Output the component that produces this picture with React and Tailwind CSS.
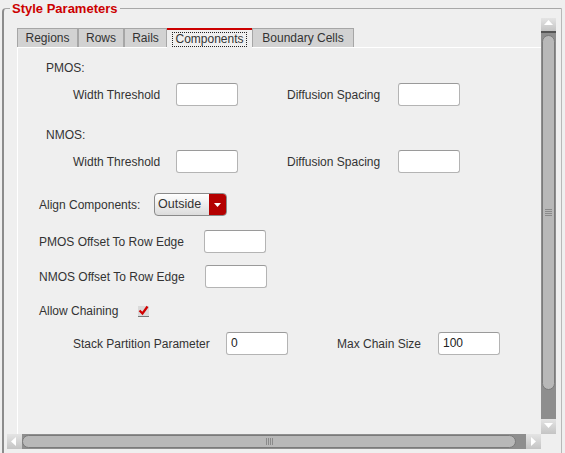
import React from "react";

const font = { fontFamily: '"Liberation Sans", Arial, sans-serif' };

function Field({ value = "", className = "" }) {
  return (
    <div
      className={`h-[23px] w-[62px] rounded-[3px] border border-[#b4b4b4] border-t-[#9a9a9a] bg-white pl-[4px] text-[12px] leading-[21px] text-[#222] ${className}`}
    >
      {value}
    </div>
  );
}

function Tab({ label, w, active }) {
  if (active) {
    return (
      <div
        className={`relative z-10 flex h-[20px] ${w} items-center justify-center border-t-2 border-[#cc0000] bg-[#efefef]`}
      >
        <span className="border border-dotted border-[#222] px-[2px] leading-[13px] text-[#333]">
          {label}
        </span>
      </div>
    );
  }
  return (
    <div
      className={`flex h-[19px] ${w} items-center justify-center border border-b-0 border-[#a6a6a6] bg-[#d2d2d2] text-[#333]`}
    >
      {label}
    </div>
  );
}

function ArrowBtn({ dir, className = "" }) {
  const pts = {
    up: "3,8 7.5,3 12,8",
    down: "3,4 7.5,9 12,4",
    left: "9,3 4,7.5 9,12",
    right: "5,3 10,7.5 5,12",
  }[dir];
  return (
    <div
      className={`flex items-center justify-center bg-gradient-to-b from-[#e4e4e4] to-[#c4c4c4] ${className}`}
    >
      <svg width="15" height="15" viewBox="0 0 15 15">
        <polygon points={pts} fill="#ffffff" />
      </svg>
    </div>
  );
}

export default function App() {
  return (
    <div className="h-[453px] w-[565px] overflow-hidden bg-[#efefef] text-[12px]" style={font}>
      <div className="relative ml-[2px] mt-[8px] h-[460px] w-[560px] border-l-2 border-r border-t border-l-[#8c8c8c] border-r-[#b8b8b8] border-t-[#a8a8a8] rounded-tl-[4px]">
        {/* group title */}
        <div className="absolute left-[6px] top-[-8px] bg-[#efefef] px-[2px] text-[13px] font-bold leading-[16px] text-[#cc0000]">
          Style Parameters
        </div>

        <div className="ml-[3px] mt-[9px] grid grid-cols-[534px_15px] grid-rows-[416px_15px]">
          {/* main content */}
          <div className="overflow-hidden pl-[10px] pt-[10px]">
            <div className="flex">
              <Tab label="Regions" w="w-[61px]" />
              <Tab label="Rows" w="w-[46px]" />
              <Tab label="Rails" w="w-[43px]" />
              <Tab label="Components" w="w-[85px]" active />
              <Tab label="Boundary Cells" w="w-[102px]" />
            </div>
            <div className="-mt-[1px] h-[400px] border-l border-t border-white bg-[#efefef] text-[#333]">
              <div className="ml-[28px] mt-[13px] leading-[14px]">PMOS:</div>
              <div className="mt-[8px] flex items-center pl-[55px]">
                <span className="w-[103px]">Width Threshold</span>
                <Field />
                <span className="ml-[49px] w-[111px]">Diffusion Spacing</span>
                <Field />
              </div>

              <div className="ml-[28px] mt-[22px] leading-[14px]">NMOS:</div>
              <div className="mt-[8px] flex items-center pl-[55px]">
                <span className="w-[103px]">Width Threshold</span>
                <Field />
                <span className="ml-[49px] w-[111px]">Diffusion Spacing</span>
                <Field />
              </div>

              <div className="mt-[20px] flex items-center pl-[21px]">
                <span className="w-[115px]">Align Components:</span>
                <div className="flex h-[23px] w-[73px] overflow-hidden rounded-[4px] border border-[#8a8a8a] bg-gradient-to-b from-white to-[#dcdcdc]">
                  <span className="flex-1 pl-[3px] text-[12.5px] leading-[21px] text-[#333]">Outside</span>
                  <div className="flex w-[17px] items-center justify-center bg-[#b40000]">
                    <svg width="9" height="6" viewBox="0 0 9 6">
                      <polygon points="1,1 8,1 4.5,5" fill="#ffffff" />
                    </svg>
                  </div>
                </div>
              </div>

              <div className="mt-[14px] flex items-center pl-[21px]">
                <span className="w-[165px]">PMOS Offset To Row Edge</span>
                <Field />
              </div>
              <div className="mt-[12px] flex items-center pl-[21px]">
                <span className="w-[166px]">NMOS Offset To Row Edge</span>
                <Field />
              </div>

              <div className="mt-[16px] flex h-[14px] items-center pl-[21px]">
                <span className="w-[99px]">Allow Chaining</span>
                <div className="flex h-[11px] w-[11px] items-center justify-center border-b border-[#777] bg-[#dadada]">
                  <svg width="11" height="11" viewBox="0 0 11 11">
                    <path d="M1.5 5.5 L4.5 8.5 L9.5 1.5" fill="none" stroke="#d00000" strokeWidth="2.2" />
                  </svg>
                </div>
              </div>

              <div className="mt-[14px] flex items-center pl-[55px]">
                <span className="w-[153px]">Stack Partition Parameter</span>
                <Field value="0" />
                <span className="ml-[49px] w-[101px]">Max Chain Size</span>
                <Field value="100" />
              </div>
            </div>
          </div>

          {/* vertical scrollbar */}
          <div className="flex flex-col bg-[#8e8e8e]">
            <ArrowBtn dir="up" className="h-[15px] border-b-2 border-[#555]" />
            <div className="mx-[1px] mt-[2px] flex h-[355px] items-center justify-center rounded-t-[7px] rounded-b-[7px] border border-[#7a7a7a] bg-[#b8b8b8]">
              <div className="flex flex-col gap-[1px]">
                <div className="h-[1px] w-[7px] bg-[#8a8a8a]" />
                <div className="h-[1px] w-[7px] bg-[#8a8a8a]" />
                <div className="h-[1px] w-[7px] bg-[#8a8a8a]" />
                <div className="h-[1px] w-[7px] bg-[#8a8a8a]" />
              </div>
            </div>
            <div className="flex-1" />
            <ArrowBtn dir="down" className="h-[15px]" />
          </div>

          {/* horizontal scrollbar */}
          <div className="flex bg-[#8e8e8e]">
            <ArrowBtn dir="left" className="w-[15px]" />
            <div className="my-[1px] flex w-[494px] items-center justify-center rounded-[7px] border border-[#7a7a7a] bg-[#b8b8b8]">
              <div className="flex gap-[1px]">
                <div className="h-[7px] w-[1px] bg-[#8a8a8a]" />
                <div className="h-[7px] w-[1px] bg-[#8a8a8a]" />
                <div className="h-[7px] w-[1px] bg-[#8a8a8a]" />
                <div className="h-[7px] w-[1px] bg-[#8a8a8a]" />
              </div>
            </div>
            <div className="flex-1" />
            <ArrowBtn dir="right" className="w-[15px]" />
          </div>
          <div className="bg-[#efefef]" />
        </div>
      </div>
    </div>
  );
}
